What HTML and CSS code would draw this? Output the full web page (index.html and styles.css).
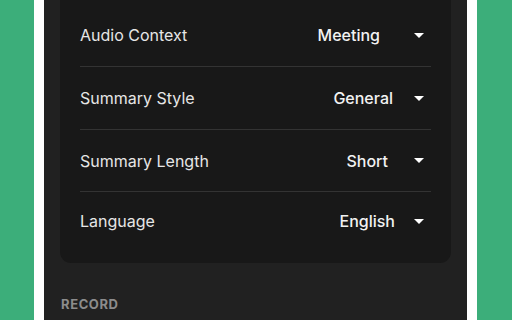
FILE: index.html
```html
<!DOCTYPE html>
<html lang="en">
<head>
    <meta charset="UTF-8">
    <meta name="viewport" content="width=device-width, initial-scale=1.0">
    <title>Settings</title>
    <link rel="stylesheet" href="styles.css">
</head>
<body>
    <div class="frame">
        <div class="panel">
            <div class="card">
                <div class="row">
                    <span class="label">Audio Context</span>
                    <span class="select select-context">Meeting
                        <svg class="caret" width="10" height="5" viewBox="0 0 10 5"><path d="M0 0H10L5 5Z" fill="#fff"/></svg>
                    </span>
                </div>
                <div class="row">
                    <span class="label">Summary Style</span>
                    <span class="select select-style">General
                        <svg class="caret" width="10" height="5" viewBox="0 0 10 5"><path d="M0 0H10L5 5Z" fill="#fff"/></svg>
                    </span>
                </div>
                <div class="row">
                    <span class="label">Summary Length</span>
                    <span class="select select-length">Short
                        <svg class="caret" width="10" height="5" viewBox="0 0 10 5"><path d="M0 0H10L5 5Z" fill="#fff"/></svg>
                    </span>
                </div>
                <div class="row">
                    <span class="label">Language</span>
                    <span class="select select-language">English
                        <svg class="caret" width="10" height="5" viewBox="0 0 10 5"><path d="M0 0H10L5 5Z" fill="#fff"/></svg>
                    </span>
                </div>
            </div>
            <h3 class="section-title">RECORD</h3>
        </div>
    </div>
</body>
</html>
```

FILE: styles.css
```css
body {
    margin: 0;
    padding: 0;
    background-color: #3cae7a;
    font-family: Inter, "Noto Sans", sans-serif;
    display: flex;
    justify-content: center;
    height: 320px;
    overflow: hidden;
}

.frame {
    width: 423px;
    margin-left: -1px;
    background-color: #ffffff;
    padding: 0 10px;
}

.panel {
    background-color: #212121;
    padding: 0 16px;
    height: 320px;
    overflow: hidden;
}

.card {
    background-color: #181818;
    border-radius: 0 0 11px 11px;
    padding: 4px 20px 13px 20px;
}

.row {
    height: 62px;
    display: flex;
    align-items: center;
    justify-content: space-between;
    border-bottom: 1px solid #333333;
}

.row:nth-child(3) {
    height: 61px;
}

.row:last-child {
    height: 58px;
    border-bottom: none;
}

.label {
    color: #e6e6e6;
    font-size: 16px;
}

.select {
    color: #f2f2f2;
    font-size: 16px;
    font-weight: 500;
    display: flex;
    align-items: center;
}

.caret {
    margin-left: 34px;
    margin-right: 7px;
}

.select-style .caret {
    margin-left: 21px;
}

.select-length .caret {
    margin-left: 26px;
}

.select-language .caret {
    margin-left: 19px;
}

.section-title {
    margin: 33px 0 0 1px;
    color: #8c8c8c;
    font-size: 13px;
    font-weight: 700;
    letter-spacing: 0.6px;
}
```
